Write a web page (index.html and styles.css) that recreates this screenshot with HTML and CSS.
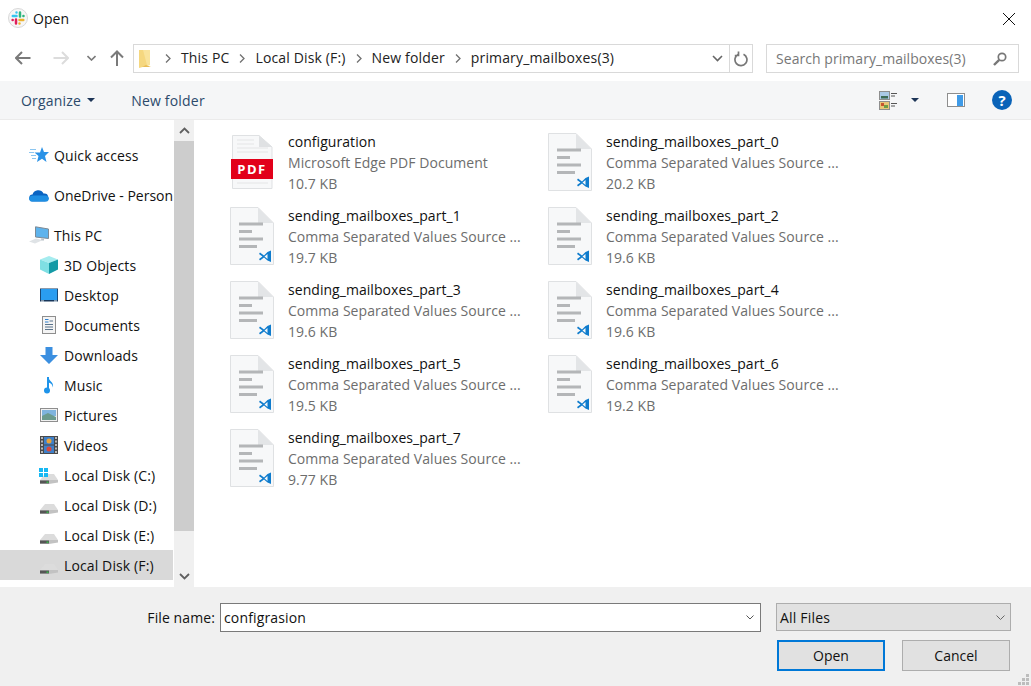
FILE: index.html
```html
<!DOCTYPE html>
<html lang="en">
<head>
<meta charset="utf-8">
<title>Open</title>
<link rel="stylesheet" href="styles.css">
</head>
<body>
<svg class="defs" width="0" height="0" aria-hidden="true">
  <symbol id="csv" viewBox="0 0 44 58">
    <path d="M.5.5H28L43.5 16V57.5H.5Z" fill="#f7f8f9" stroke="#dfe1e3"/>
    <path d="M28 .5V16H43.5Z" fill="#e3e5e7"/>
    <path d="M9 17H33M9 24.500H22M9 32H33M9 39.500H27" stroke="#b4b6b8" stroke-width="3" fill="none"/>
    <path d="M30 45.500 34 48.500 37.500 45 41 43.500V55L37.500 53.500 34 50.500 30 53.500 29 52 32.500 49.500 29 47Z" fill="#0f7ccd"/>
    <path d="M37.500 47V52L34.500 49.500Z" fill="#f7f8f9"/>
  </symbol>
  <symbol id="disk" viewBox="0 0 18 11">
    <path d="M0 7 5 1H14L18 7Z" fill="#dcdcdc"/>
    <path d="M0 7H18V9.500L9 11H0Z" fill="#c2c2c2"/>
    <path d="M0 7.500H9V10.500H0Z" fill="#555"/>
    <path d="M6.500 8.500H8.500V10H6.500Z" fill="#39b54a"/>
  </symbol>
  <symbol id="chevron" viewBox="0 0 6 9">
    <path d="M1 .5 5 4.500 1 8.500" stroke="#707070" stroke-width="1.300" fill="none"/>
  </symbol>
</svg>
<main class="dialog">
  <header class="title-bar">
    <svg class="slack" width="24" height="24" viewBox="0 0 24 24">
      <circle cx="12" cy="12" r="9.500" fill="#f6f6f6" stroke="#d8d8d8"/>
      <g stroke-width="2.500" stroke-linecap="round" fill="none">
        <path d="M6.800 10H10.500M10.500 6.500V6.600" stroke="#36c5f0"/>
        <path d="M14 6.500V10.500M17.500 10H17.400" stroke="#2eb67d"/>
        <path d="M13.500 14H17.300M13.500 17.500V17.400" stroke="#ecb22e"/>
        <path d="M10 13.500V17.500M6.600 14H6.700" stroke="#e01e5a"/>
      </g>
    </svg>
    <span class="title-text">Open</span>
    <svg class="close" width="12" height="12" viewBox="0 0 12 12"><path d="M0 0 12 12M12 0 0 12" stroke="#111" fill="none"/></svg>
  </header>

  <section class="address-row">
    <svg class="nav-arrow" width="16" height="14" viewBox="0 0 16 14"><path d="M15.500 7H1M7 1 1 7 7 13" stroke="#7a7a7a" stroke-width="2" fill="none"/></svg>
    <svg class="nav-arrow forward" width="16" height="14" viewBox="0 0 16 14"><path d="M.5 7H15M9 1 15 7 9 13" stroke="#dcdcdc" stroke-width="2" fill="none"/></svg>
    <svg class="nav-down" width="9" height="6" viewBox="0 0 9 6"><path d="M.5 1 4.500 5 8.500 1" stroke="#7a7a7a" stroke-width="1.600" fill="none"/></svg>
    <svg class="nav-up" width="14" height="16" viewBox="0 0 14 16"><path d="M7 16V1.500M1 7.500 7 1.500 13 7.500" stroke="#7a7a7a" stroke-width="2" fill="none"/></svg>
    <div class="breadcrumb">
      <svg class="folder" width="12" height="18" viewBox="0 0 12 18"><path d="M0 0H11V15L0 18Z" fill="#f5d77f"/><path d="M4 0H11V15H8Z" fill="#f9e39c"/><path d="M7 15 12 17H3Z" fill="#e9bd55"/></svg>
      <div class="crumbs">
        <svg class="chev" width="6" height="9"><use href="#chevron"/></svg><span class="crumb">This PC</span>
        <svg class="chev" width="6" height="9"><use href="#chevron"/></svg><span class="crumb">Local Disk (F:)</span>
        <svg class="chev" width="6" height="9"><use href="#chevron"/></svg><span class="crumb">New folder</span>
        <svg class="chev" width="6" height="9"><use href="#chevron"/></svg><span class="crumb">primary_mailboxes(3)</span>
      </div>
      <svg class="drop" width="11" height="7" viewBox="0 0 11 7"><path d="M1 1 5.500 5.500 10 1" stroke="#666" stroke-width="1.600" fill="none"/></svg>
      <span class="refresh"><svg width="15" height="16" viewBox="0 0 15 16"><path d="M9.500 3.200A6 6 0 1 1 4 3.400M4.500 .5V4.500H.8" stroke="#777" stroke-width="1.700" fill="none"/></svg></span>
    </div>
    <div class="search">
      <span class="search-text">Search primary_mailboxes(3)</span>
      <svg width="14" height="14" viewBox="0 0 14 14"><circle cx="9" cy="5" r="3.700" fill="none" stroke="#777" stroke-width="1.700"/><path d="M6.200 7.800 1 13" stroke="#777" stroke-width="2.400"/></svg>
    </div>
  </section>

  <nav class="toolbar">
    <span class="tool organize">Organize</span>
    <span class="tri"></span>
    <span class="tool new-folder">New folder</span>
    <svg class="views" width="18" height="19" viewBox="0 0 18 19">
      <rect x=".5" y=".5" width="10" height="8" fill="#a9c9e6" stroke="#8e8e8e"/><rect x="2" y="5" width="7" height="2.500" fill="#3d6b55"/>
      <rect x=".5" y="10.500" width="10" height="8" fill="#e8c777" stroke="#8e8e8e"/><rect x="2" y="12" width="3" height="3" fill="#c8552d"/><rect x="5" y="14" width="4" height="3" fill="#6f9d44"/>
      <path d="M12 2.500H18M12 5H16M12 12.500H18M12 15H16" stroke="#555"/>
    </svg>
    <span class="tri views-tri"></span>
    <svg class="pane" width="18" height="14" viewBox="0 0 18 14"><rect x=".5" y=".5" width="17" height="13" fill="#fff" stroke="#8e8e8e"/><rect x="10" y="2" width="6" height="11" fill="#3f9be8"/></svg>
    <span class="help">?</span>
  </nav>

  <div class="content">
    <aside class="nav-pane">
      <ul class="tree">
        <li class="item top group-gap">
          <svg class="top-ico" width="20" height="18" viewBox="0 0 20 18"><path d="M13 1 15 6H20L16 10 17.500 16 13 12.800 8 16 9.500 10 5.500 6.500H11Z" fill="#2b92e6"/><path d="M1 3.500H7M0 6.500H5M2 9.500H7M3 12.500H7" stroke="#8cc6f0"/></svg>
          <span>Quick access</span>
        </li>
        <li class="item top group-gap">
          <svg class="top-ico" width="20" height="14" viewBox="0 0 20 14"><path d="M4 13.500A3.500 3.500 0 0 1 3.500 6.500 6 6 0 0 1 14.500 5.500 4 4 0 0 1 16 13.500Z" fill="#0a64c2"/><path d="M0 10.500A4 4 0 0 1 4 7.500H16A4 4 0 0 1 20 10.500 3.500 3.500 0 0 1 16 13.500H4A3.500 3.500 0 0 1 0 10.500Z" fill="#1f8fe3"/></svg>
          <span class="tight">OneDrive - Person</span>
        </li>
        <li class="item top">
          <svg class="top-ico" width="20" height="18" viewBox="0 0 20 18"><path d="M6.500.8 19.500 3V12.500L6.500 11Z" fill="#5eb3ec" stroke="#7d8a95"/><path d="M12 12.500H15V14.500H12Z" fill="#b9c0c6"/><path d="M0 15.500 7 12.500 14 14 6 17.500Z" fill="#dfe3e6"/></svg>
          <span>This PC</span>
        </li>
        <li class="item child">
          <span class="ico"><svg width="18" height="18" viewBox="0 0 18 18"><path d="M9 0 18 3.500 9 7 0 3.500Z" fill="#a5ecef"/><path d="M0 3.500 9 7V18L0 13.500Z" fill="#7fdfe3"/><path d="M9 7 18 3.500V13.500L9 18Z" fill="#149aa6"/></svg></span>
          <span>3D Objects</span>
        </li>
        <li class="item child">
          <span class="ico"><svg width="18" height="14" viewBox="0 0 18 14"><rect y=".5" width="18" height="13" fill="#17365a"/><rect x=".8" y="1" width="16.400" height="11" fill="#2a9df0"/><path d="M1 13H4M14 13H17" stroke="#e8f3fb"/></svg></span>
          <span>Desktop</span>
        </li>
        <li class="item child">
          <span class="ico"><svg width="14" height="18" viewBox="0 0 14 18"><rect x=".5" y=".5" width="13" height="17" fill="#f4f4f4" stroke="#8e8e8e"/><path d="M3 3.500H6.500M3 6H6.500" stroke="#2f80cf"/><path d="M7.500 5H11M3 8.500H11M3 11H11M3 13.500H11" stroke="#59738c"/></svg></span>
          <span>Documents</span>
        </li>
        <li class="item child">
          <span class="ico"><svg width="18" height="17" viewBox="0 0 18 17"><path d="M5.500 0H12.500V8H18L9 17 0 8H5.500Z" fill="#3b8fe0"/></svg></span>
          <span>Downloads</span>
        </li>
        <li class="item child">
          <span class="ico"><svg width="10" height="18" viewBox="0 0 10 18"><path d="M4 1V14" stroke="#1e94ea" stroke-width="2"/><ellipse cx="3" cy="14.500" rx="3" ry="3" fill="#1e94ea"/><path d="M4 1C5 5 10 6 9 11.500 8 8 7 7 4 6.500Z" fill="#1e94ea"/></svg></span>
          <span>Music</span>
        </li>
        <li class="item child">
          <span class="ico"><svg width="18" height="14" viewBox="0 0 18 14"><rect x=".5" y=".5" width="17" height="13" fill="#f1f1f1" stroke="#8e8e8e"/><rect x="2" y="2" width="14" height="6" fill="#7fb4de"/><path d="M2 8 8 5 16 9V12H2Z" fill="#6b9b8e"/></svg></span>
          <span>Pictures</span>
        </li>
        <li class="item child">
          <span class="ico"><svg width="18" height="18" viewBox="0 0 18 18"><rect width="18" height="18" fill="#4a4a4a"/><rect x="4" y="1" width="10" height="7.500" fill="#3e80c9"/><rect x="4" y="9.500" width="10" height="7.500" fill="#3e80c9"/><circle cx="9" cy="5" r="2.500" fill="#e8a33a"/><circle cx="9" cy="13" r="2.500" fill="#d9483b"/><path d="M2 1V17M16 1V17" stroke="#ddd" stroke-width="1.500" stroke-dasharray="2 1.500"/></svg></span>
          <span>Videos</span>
        </li>
        <li class="item child">
          <span class="ico disk-wrap"><svg class="winlogo" width="9" height="9" viewBox="0 0 9 9"><path d="M0 0H4V4H0ZM5 0H9V4H5ZM0 5H4V9H0ZM5 5H9V9H5Z" fill="#16b8f3"/></svg><svg width="18" height="11"><use href="#disk"/></svg></span>
          <span>Local Disk (C:)</span>
        </li>
        <li class="item child">
          <span class="ico disk-wrap"><svg width="18" height="11"><use href="#disk"/></svg></span>
          <span>Local Disk (D:)</span>
        </li>
        <li class="item child">
          <span class="ico disk-wrap"><svg width="18" height="11"><use href="#disk"/></svg></span>
          <span>Local Disk (E:)</span>
        </li>
        <li class="item child selected">
          <span class="ico disk-wrap"><svg width="18" height="11"><use href="#disk"/></svg></span>
          <span>Local Disk (F:)</span>
        </li>
      </ul>
      <div class="scrollbar">
        <span class="sb-btn"><svg width="11" height="7" viewBox="0 0 11 7"><path d="M1 6 5.500 1.500 10 6" stroke="#606060" stroke-width="1.800" fill="none"/></svg></span>
        <span class="sb-thumb"></span>
        <span class="sb-track"></span>
        <span class="sb-btn"><svg width="11" height="7" viewBox="0 0 11 7"><path d="M1 1 5.500 5.500 10 1" stroke="#606060" stroke-width="1.800" fill="none"/></svg></span>
      </div>
    </aside>

    <div class="files">
      <article class="file">
        <svg class="ficon" width="44" height="58" viewBox="0 0 44 58">
          <path d="M2.500 2.500H29L42 14V55.500H2.500Z" fill="#f7f8f9" stroke="#dfe1e3"/>
          <path d="M29 2.500V14H42Z" fill="#dfe1e3"/>
          <path d="M7 7H24M7 11H24M7 15H38M7 19H38M7 50H38" stroke="#e4e5e6"/>
          <rect x="1" y="26" width="42" height="20" fill="#e2001a"/>
          <text x="22" y="41" class="pdf-label" text-anchor="middle">PDF</text>
        </svg>
        <div class="meta"><span class="name">configuration</span><span class="sub">Microsoft Edge PDF Document</span><span class="sub">10.7 KB</span></div>
      </article>
      <article class="file">
        <svg class="ficon" width="44" height="58"><use href="#csv"/></svg>
        <div class="meta"><span class="name">sending_mailboxes_part_0</span><span class="sub">Comma Separated Values Source ...</span><span class="sub">20.2 KB</span></div>
      </article>
      <article class="file">
        <svg class="ficon" width="44" height="58"><use href="#csv"/></svg>
        <div class="meta"><span class="name">sending_mailboxes_part_1</span><span class="sub">Comma Separated Values Source ...</span><span class="sub">19.7 KB</span></div>
      </article>
      <article class="file">
        <svg class="ficon" width="44" height="58"><use href="#csv"/></svg>
        <div class="meta"><span class="name">sending_mailboxes_part_2</span><span class="sub">Comma Separated Values Source ...</span><span class="sub">19.6 KB</span></div>
      </article>
      <article class="file">
        <svg class="ficon" width="44" height="58"><use href="#csv"/></svg>
        <div class="meta"><span class="name">sending_mailboxes_part_3</span><span class="sub">Comma Separated Values Source ...</span><span class="sub">19.6 KB</span></div>
      </article>
      <article class="file">
        <svg class="ficon" width="44" height="58"><use href="#csv"/></svg>
        <div class="meta"><span class="name">sending_mailboxes_part_4</span><span class="sub">Comma Separated Values Source ...</span><span class="sub">19.6 KB</span></div>
      </article>
      <article class="file">
        <svg class="ficon" width="44" height="58"><use href="#csv"/></svg>
        <div class="meta"><span class="name">sending_mailboxes_part_5</span><span class="sub">Comma Separated Values Source ...</span><span class="sub">19.5 KB</span></div>
      </article>
      <article class="file">
        <svg class="ficon" width="44" height="58"><use href="#csv"/></svg>
        <div class="meta"><span class="name">sending_mailboxes_part_6</span><span class="sub">Comma Separated Values Source ...</span><span class="sub">19.2 KB</span></div>
      </article>
      <article class="file">
        <svg class="ficon" width="44" height="58"><use href="#csv"/></svg>
        <div class="meta"><span class="name">sending_mailboxes_part_7</span><span class="sub">Comma Separated Values Source ...</span><span class="sub">9.77 KB</span></div>
      </article>
    </div>
  </div>

  <footer class="footer">
    <div class="fields">
      <span class="label">File name:</span>
      <div class="name-input">
        <span>configrasion</span>
        <svg width="8" height="5" viewBox="0 0 8 5"><path d="M.5.5 4 4 7.500.5" stroke="#555" fill="none"/></svg>
      </div>
      <div class="type-select">
        <span>All Files</span>
        <svg width="9" height="5" viewBox="0 0 9 5"><path d="M.5.5 4.500 4.500 8.500.5" stroke="#666" fill="none"/></svg>
      </div>
    </div>
    <div class="actions">
      <button class="btn primary" type="button">Open</button>
      <button class="btn" type="button">Cancel</button>
    </div>
    <svg class="grip" width="12" height="12" viewBox="0 0 12 12"><path d="M8 0H11V3H8ZM4 4H7V7H4ZM8 4H11V7H8ZM0 8H3V11H0ZM4 8H7V11H4ZM8 8H11V11H8Z" fill="#bdbdbd"/></svg>
  </footer>
</main>
</body>
</html>
```

FILE: styles.css
```css
* { box-sizing: border-box; }
html, body { margin: 0; padding: 0; background: #fff; }
body { width: 1031px; height: 686px; overflow: hidden; }
.defs { position: absolute; }
.dialog {
  width: 1031px; height: 686px; display: flex; flex-direction: column;
  font-family: "Open Sans", "Noto Sans", sans-serif; font-size: 14px; letter-spacing: .05px; color: #111; position: relative;
}
.title-bar { height: 44px; flex: none; display: flex; align-items: flex-start; padding: 6px 0 0 6px; }
.slack { flex: none; }
.title-text { margin-left: 3px; line-height: 26px; font-size: 14px; }
.close { margin: 7px 16px 0 auto; }
.address-row { height: 37px; flex: none; display: flex; align-items: flex-start; }
.nav-arrow { margin: 7px 0 0 15px; }
.nav-arrow.forward { margin-left: 22px; }
.nav-down { margin: 11px 0 0 18px; }
.nav-up { margin: 6px 0 0 14px; }
.breadcrumb {
  margin-left: 9px; width: 620px; height: 29px; border: 1px solid #d9d9d9;
  display: flex; align-items: center; padding-left: 5px;
}
.folder { flex: none; }
.crumbs { display: flex; align-items: center; color: #222; padding: 0 0 2px 14px; flex: 1; letter-spacing: .15px; }
.crumb { margin-left: 10px; margin-right: 10px; white-space: nowrap; }
.chev { flex: none; margin-top: 2px; }
.drop { flex: none; margin-right: 6px; }
.refresh { width: 23px; height: 27px; border-left: 1px solid #d9d9d9; display: flex; align-items: center; justify-content: center; flex: none; }
.search {
  margin-left: 13px; width: 253px; height: 29px; border: 1px solid #d9d9d9;
  display: flex; align-items: center; justify-content: space-between; padding: 0 11px 0 9px; color: #777;
}
.toolbar {
  height: 39px; flex: none; background: #f5f6f7; border-bottom: 1px solid #ebebeb;
  display: flex; align-items: center; color: #2c4a6b;
}
.tool { white-space: nowrap; letter-spacing: .2px; }
.organize { margin-left: 21px; }
.tri { width: 0; height: 0; border: 4px solid transparent; border-top: 4px solid #1d3557; border-bottom: 0; margin-left: 6px; flex: none; }
.new-folder { margin-left: 36px; }
.views { margin-left: auto; flex: none; }
.views-tri { margin-left: 14px; }
.pane { margin-left: 28px; flex: none; }
.help {
  margin: 0 19px 0 27px; width: 20px; height: 20px; border-radius: 50%; background: #0a63b8; color: #fff;
  font-weight: 700; font-size: 15px; line-height: 20px; text-align: center; flex: none;
}
.content { flex: 1; min-height: 0; display: flex; }
.nav-pane { width: 195px; flex: none; display: flex; }
.tree { list-style: none; margin: 0; padding: 20px 0 0; width: 173px; flex: none; overflow: hidden; letter-spacing: .12px; }
.item { height: 30px; display: flex; align-items: center; white-space: nowrap; }
.item.group-gap { margin-bottom: 10px; }
.item.top { padding-left: 29px; gap: 5px; }
.tight { letter-spacing: 0; }
.top-ico { flex: none; }
.item.child { padding-left: 40px; }
.ico { width: 18px; margin-right: 6px; flex: none; display: flex; justify-content: center; align-items: center; }
.disk-wrap { flex-direction: column; justify-content: flex-end; height: 18px; position: relative; }
.winlogo { position: absolute; left: -1px; top: 2px; }
.selected { background: #d9d9d9; }
.scrollbar { width: 20px; margin-left: 1px; display: flex; flex-direction: column; background: #f0f0f0; flex: none; }
.sb-btn { height: 21px; display: flex; align-items: center; justify-content: center; flex: none; }
.sb-thumb { height: 390px; background: #cdcdcd; flex: none; }
.sb-track { flex: 1; }
.files {
  flex: 1; display: grid; grid-template-columns: 318px 318px; grid-auto-rows: 74px;
  align-content: start; padding: 11px 0 0 35px;
}
.file { display: flex; align-items: flex-start; }
.ficon { flex: none; margin-top: 2px; }
.meta { margin-left: 14px; display: flex; flex-direction: column; }
.name, .sub { line-height: 21px; white-space: nowrap; }
.sub { color: #6d6d6d; }
.pdf-label { font-family: "Open Sans", sans-serif; font-size: 13px; font-weight: 700; fill: #fff; letter-spacing: 1.500px; }
.footer { height: 99px; flex: none; background: #f0f0f0; position: relative; padding-top: 16px; }
.fields { display: flex; align-items: flex-start; height: 37px; }
.label { width: 215px; text-align: right; line-height: 29px; flex: none; letter-spacing: .1px; }
.name-input {
  margin-left: 5px; width: 541px; height: 29px; background: #fff; border: 1px solid #7a7a7a;
  display: flex; align-items: center; justify-content: space-between; padding: 0 6px 0 3px; letter-spacing: .15px;
}
.type-select {
  margin-left: 15px; width: 235px; height: 28px; background: #e1e1e1; border: 1px solid #adadad;
  display: flex; align-items: center; justify-content: space-between; padding: 0 5px 0 3px; letter-spacing: .2px;
}
.actions { display: flex; padding-left: 777px; gap: 17px; }
.btn {
  width: 108px; height: 31px; background: #e1e1e1; border: 1px solid #adadad; padding: 0;
  font-family: inherit; font-size: 14px; color: #111;
}
.btn.primary { border: 2px solid #0078d7; }
.grip { position: absolute; right: 1px; bottom: 0; }
```
